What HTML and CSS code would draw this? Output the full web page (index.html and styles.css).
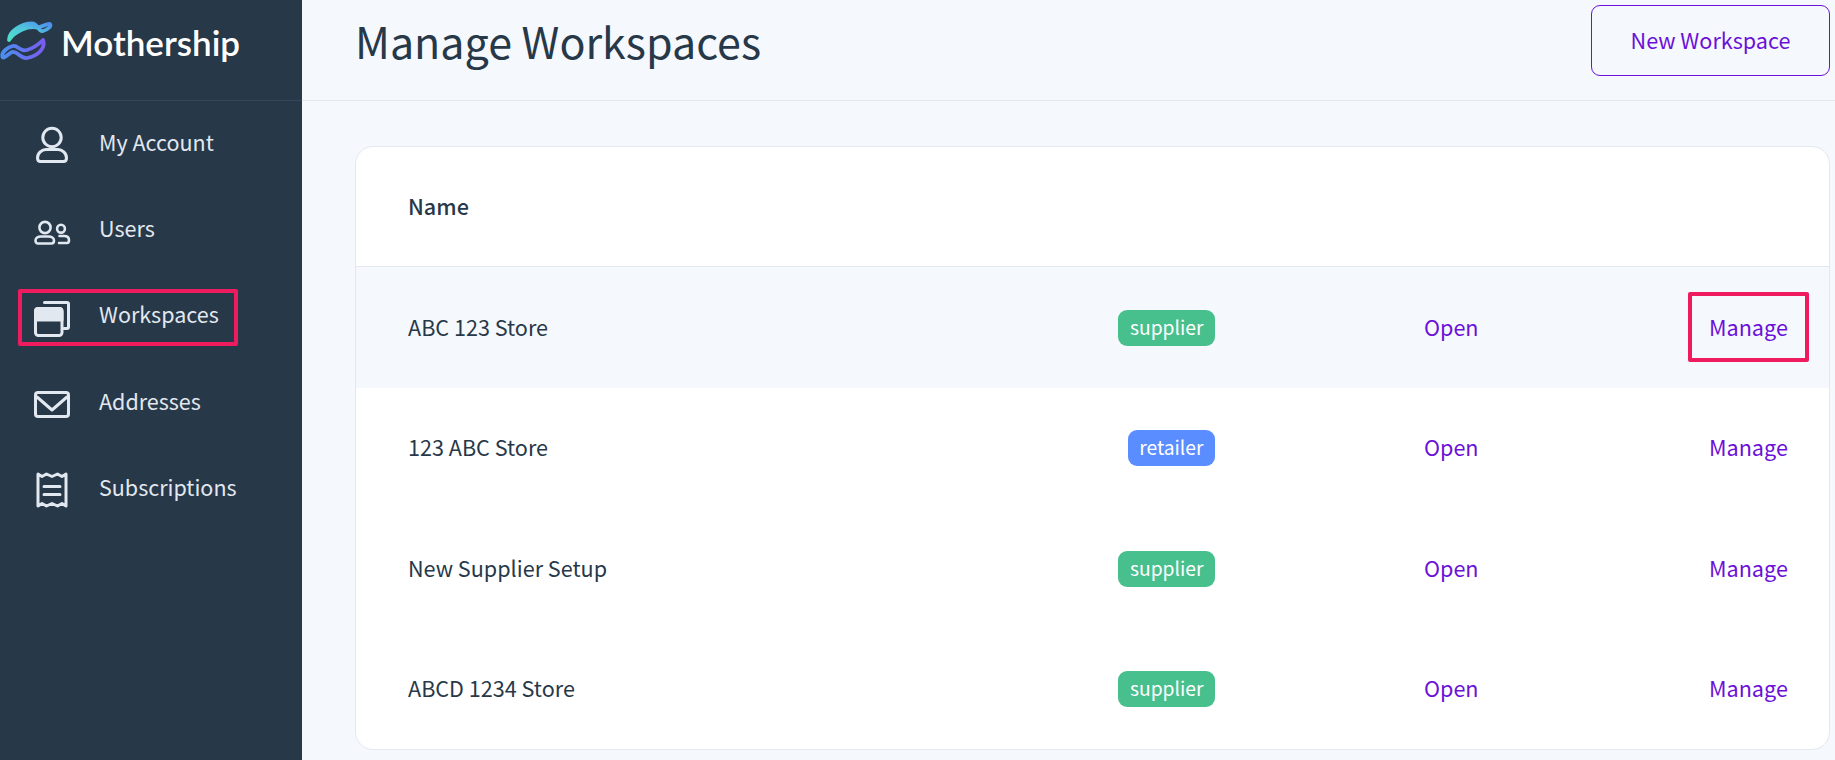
FILE: index.html
```html
<!DOCTYPE html>
<html lang="en">
<head>
<meta charset="utf-8">
<title>Manage Workspaces</title>
<link rel="stylesheet" href="styles.css">
</head>
<body>
<div class="app">
  <aside class="sidebar">
    <div class="brand">
      <svg class="brand-mark" viewBox="0 0 54 44" width="54" height="44" aria-hidden="true">
        <defs>
          <linearGradient id="gt" x1="0" y1="1" x2="1" y2="0"><stop offset="0" stop-color="#4fe0c8"/><stop offset="0.55" stop-color="#4fc4dc"/><stop offset="1" stop-color="#4f8cf0"/></linearGradient>
          <linearGradient id="gb" x1="0" y1="0.6" x2="1" y2="0.6"><stop offset="0" stop-color="#4a90f0"/><stop offset="1" stop-color="#7a5cf0"/></linearGradient>
        </defs>
        <path d="M9 19C9 10 22 2.500 32 2.500C38 2.500 38 11 43 10C47 9 52 5 50 3C47 1.500 42 7 36 6.500C28 5 15 10 9 19Z" fill="none" stroke="url(#gt)" stroke-width="3.800" stroke-linejoin="round"/>
        <path d="M43 19C46 27 38 35 27 37C20 38 18 30 12 31C8 33 4 38 2.500 36C1 31 8 26 13 25C18 24 20 31 27 29C34 27 39 23 43 19Z" fill="none" stroke="url(#gb)" stroke-width="3.800" stroke-linejoin="round"/>
      </svg>
      <span class="brand-name">Mothership</span>
    </div>
    <nav class="nav">
      <a class="nav-item">
        <svg class="nav-icon" viewBox="0 0 36 36" aria-hidden="true"><circle cx="18" cy="12.500" r="9.200"/><path d="M3.500 33C3.500 28 8 24.500 12 24.500H24C28 24.500 32.500 28 32.500 33C32.500 35 31.500 36.500 29.500 36.500H6.500C4.500 36.500 3.500 35 3.500 33Z"/></svg>
        <span>My Account</span>
      </a>
      <a class="nav-item">
        <svg class="nav-icon icon-thin" viewBox="0 0 36 36" aria-hidden="true"><circle cx="11" cy="16.500" r="5.600"/><circle cx="27" cy="17.700" r="3.900"/><path d="M1.500 29.500C1.500 27 4 25.500 7 25.500H14.500C17.500 25.500 20 27 20 29.500C20 31.500 19 32.500 17.500 32.500H4C2.500 32.500 1.500 31.500 1.500 29.500Z"/><path d="M25.500 25H30C33 25 35 26.500 35 29C35 31 34 32 33 32H25"/></svg>
        <span>Users</span>
      </a>
      <a class="nav-item">
        <svg class="nav-icon" viewBox="0 0 36 36" aria-hidden="true"><path d="M10.500 4.500H33C34 4.500 34.500 5 34.500 6V29C34.500 30 34 30.500 33 30.500H30"/><rect x="1.500" y="10.500" width="26.500" height="27" rx="3"/><path class="fill" d="M1.500 13C1.500 11.300 2.300 10.500 4 10.500H25.500C27.200 10.500 28 11.300 28 13V22H1.500Z"/></svg>
        <span>Workspaces</span>
        <i class="mark mark-nav"></i>
      </a>
      <a class="nav-item">
        <svg class="nav-icon" viewBox="0 0 36 36" aria-hidden="true"><rect x="1.500" y="8.500" width="33" height="24" rx="2.500"/><path d="M3 13L18 26L33 13"/></svg>
        <span>Addresses</span>
      </a>
      <a class="nav-item">
        <svg class="nav-icon" viewBox="0 0 36 36" aria-hidden="true"><path d="M4 4L8 6.500L12.500 4L18 6.500L23.500 4L28 6.500L32 4V36L28 33.500L23.500 36L18 33.500L12.500 36L8 33.500L4 36Z"/><path d="M10 16.500H26M10 24.500H26"/></svg>
        <span>Subscriptions</span>
      </a>
    </nav>
  </aside>
  <main class="main">
    <header class="topbar">
      <h1 class="title">Manage Workspaces</h1>
      <button class="btn" type="button">New Workspace</button>
    </header>
    <section class="card">
      <div class="head">Name</div>
      <div class="row row-hl">
        <span class="name">ABC 123 Store</span>
        <span class="badge badge-supplier">supplier</span>
        <a class="link link-open">Open</a>
        <a class="link link-manage">Manage<i class="mark mark-manage"></i></a>
      </div>
      <div class="row">
        <span class="name">123 ABC Store</span>
        <span class="badge badge-retailer">retailer</span>
        <a class="link link-open">Open</a>
        <a class="link link-manage">Manage</a>
      </div>
      <div class="row">
        <span class="name">New Supplier Setup</span>
        <span class="badge badge-supplier">supplier</span>
        <a class="link link-open">Open</a>
        <a class="link link-manage">Manage</a>
      </div>
      <div class="row">
        <span class="name">ABCD 1234 Store</span>
        <span class="badge badge-supplier">supplier</span>
        <a class="link link-open">Open</a>
        <a class="link link-manage">Manage</a>
      </div>
    </section>
  </main>
</div>
</body>
</html>
```
FILE: styles.css
```css
* { box-sizing: border-box; }
html, body { margin: 0; height: 100%; overflow: hidden; }
body {
  font-family: "Noto Sans CJK JP", "Noto Sans", sans-serif;
  color: #273849;
  background: #f5f8fc;
}
.app { display: flex; height: 760px; }
.sidebar { width: 302px; flex: none; background: #273849; color: #e2e8f0; }
.brand {
  height: 101px;
  border-bottom: 1px solid #33485a;
  display: flex;
  align-items: flex-start;
  padding-top: 20px;
  gap: 7px;
}
.brand-mark { flex: none; margin-top: 1px; }
.brand-name {
  font-family: "Lato", sans-serif;
  font-weight: 600;
  font-size: 35px;
  line-height: 44px;
  color: #fff;
}
.nav { display: flex; flex-direction: column; }
.nav-item {
  position: relative;
  height: 86.33px;
  display: flex;
  align-items: center;
  gap: 29px;
  padding-left: 34px;
  font-size: 21.5px;
}
.nav-item span { position: relative; top: -2px; }
.nav-item:first-child { margin-top: -1px; }
.nav-icon {
  width: 36px;
  height: 36px;
  flex: none;
  overflow: visible;
  fill: none;
  stroke: #e2e8f0;
  stroke-width: 3;
  stroke-linejoin: round;
  stroke-linecap: round;
}
.icon-thin { stroke-width: 2.600; }
.nav-icon .fill { fill: #e2e8f0; }
.mark { position: absolute; border: 4px solid #ee1c5f; border-radius: 2px; pointer-events: none; }
.mark-nav { left: 18px; width: 220px; top: 16px; height: 57px; }
.main { flex: 1; min-width: 0; display: flex; flex-direction: column; }
.topbar {
  height: 101px;
  border-bottom: 1px solid #e2e8f0;
  display: flex;
  align-items: center;
  justify-content: space-between;
  padding: 0 5px 19px 53px;
}
.title { margin: 0 0 2px; font-weight: 400; font-size: 43px; line-height: 60px; }
.btn {
  width: 239px;
  height: 71px;
  padding: 0 0 2px;
  font: inherit;
  font-size: 21.6px;
  color: #6b11d8;
  background: transparent;
  border: 1.5px solid #6b11d8;
  border-radius: 9px;
}
.card {
  margin: 45px 5px 0 53px;
  height: 604px;
  background: #fff;
  border: 1.5px solid #e2e8f0;
  border-radius: 18px;
  overflow: hidden;
}
.head {
  height: 120px;
  border-bottom: 1.5px solid #e2e8f0;
  display: flex;
  align-items: center;
  padding: 0 0 2px 52px;
  font-size: 21.6px;
  font-weight: 500;
}
.row {
  height: 120.500px;
  display: grid;
  grid-template-columns: 1fr 100px 494px 78px;
  align-items: center;
  padding: 0 42px 2px 52px;
  font-size: 21.6px;
}
.row-hl { background: #f5f8fc; }
.badge {
  justify-self: end;
  height: 36px;
  margin-top: 3px;
  padding: 0 11.500px 2px;
  display: flex;
  align-items: center;
  border-radius: 9px;
  color: #fff;
  font-size: 19.300px;
}
.badge-supplier { background: #48c08d; }
.badge-retailer { background: #5a8dff; }
.link { color: #6b11d8; }
.link-open { padding-left: 209px; }
.link-manage { position: relative; }
.mark-manage { left: -21px; right: -22px; top: 50%; height: 70px; margin-top: 1px; transform: translateY(-50%); }
```
